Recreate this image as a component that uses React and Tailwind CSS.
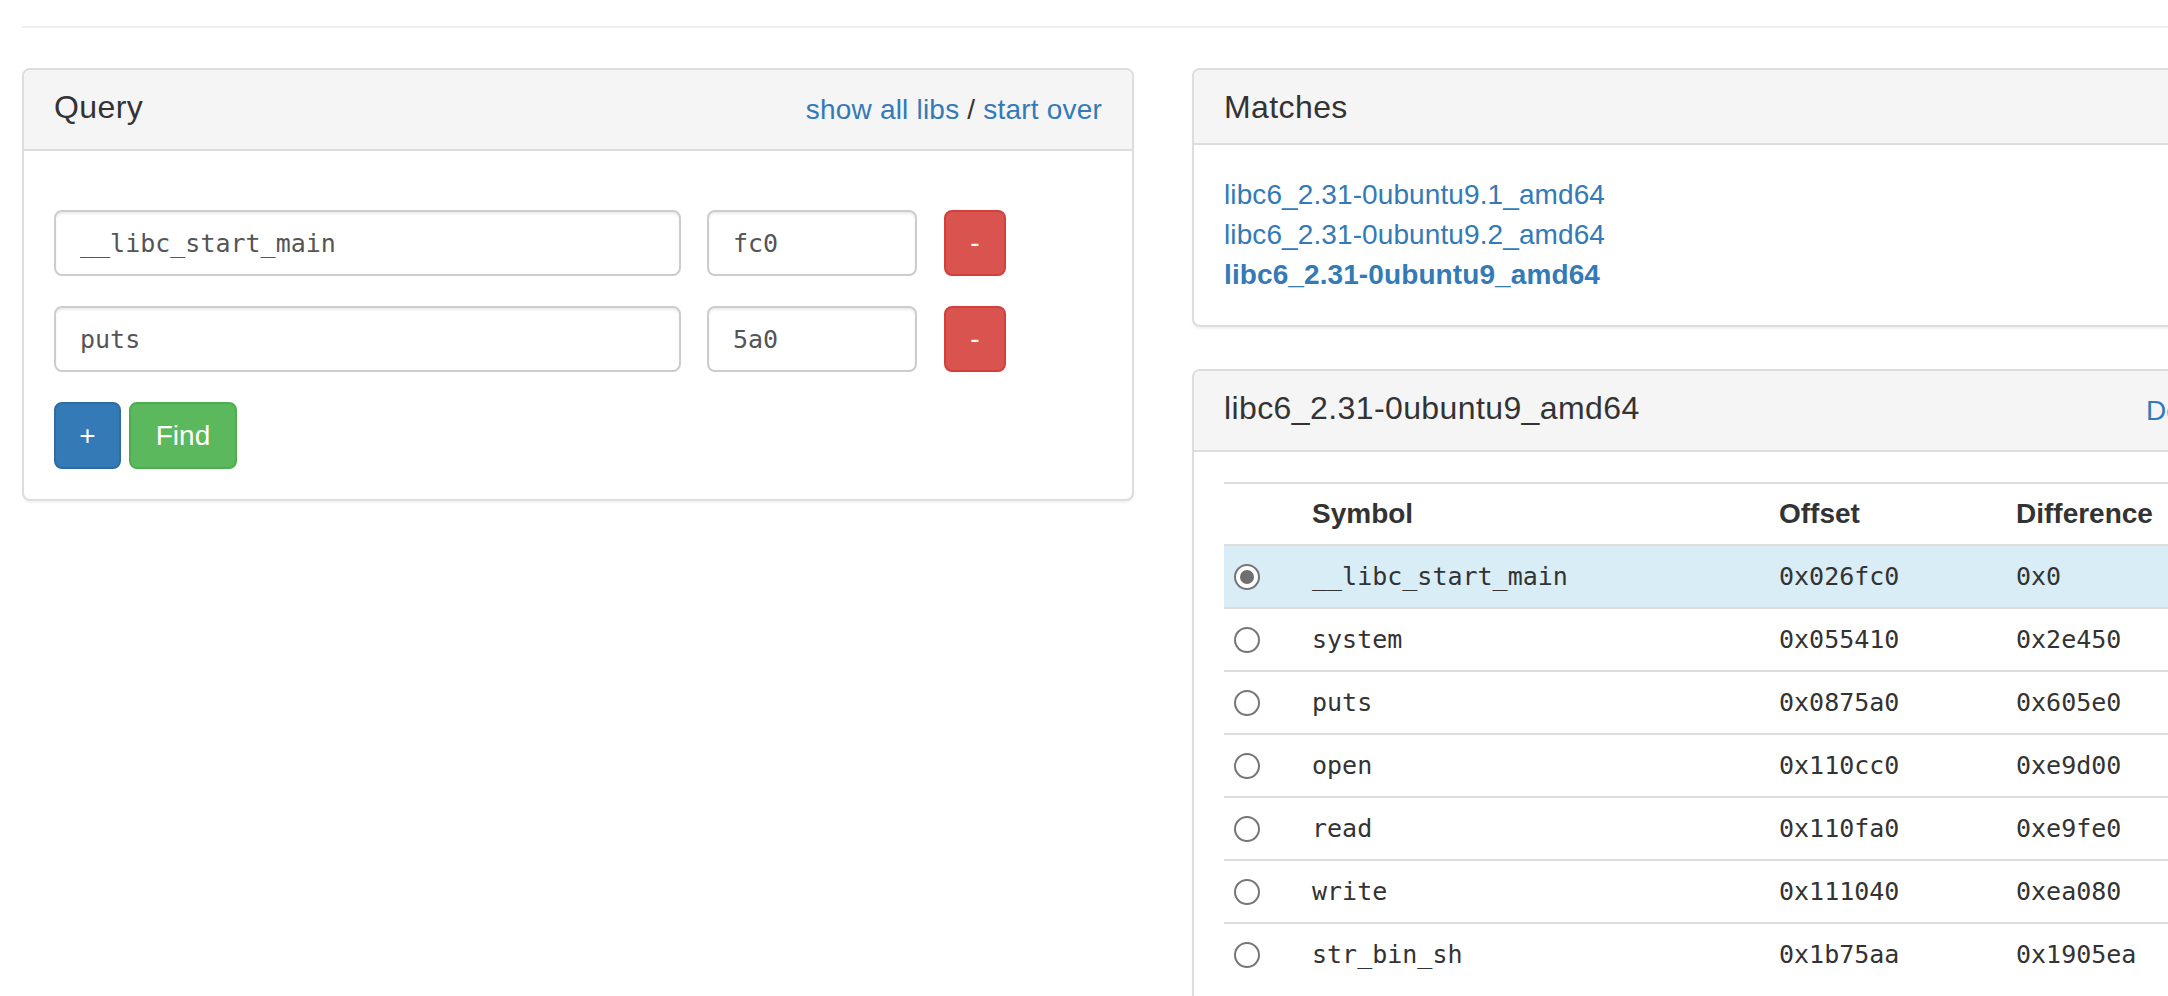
import React from 'react';

const rows = [
  { sym: '__libc_start_main', off: '0x026fc0', diff: '0x0', sel: true },
  { sym: 'system', off: '0x055410', diff: '0x2e450' },
  { sym: 'puts', off: '0x0875a0', diff: '0x605e0' },
  { sym: 'open', off: '0x110cc0', diff: '0xe9d00' },
  { sym: 'read', off: '0x110fa0', diff: '0xe9fe0' },
  { sym: 'write', off: '0x111040', diff: '0xea080' },
  { sym: 'str_bin_sh', off: '0x1b75aa', diff: '0x1905ea' },
];

const queries = [
  { sym: '__libc_start_main', off: 'fc0' },
  { sym: 'puts', off: '5a0' },
];

const Radio = ({ checked }) => (
  <div className="w-[26px] h-[26px] rounded-full border-2 border-[#767676] bg-white flex items-center justify-center">
    {checked && <div className="w-[14px] h-[14px] rounded-full bg-[#6f6f6f]" />}
  </div>
);

const Panel = ({ className = '', children }) => (
  <div className={`w-[1112px] shrink-0 rounded-[8px] border-2 border-[#ddd] bg-white shadow-[0_2px_2px_rgba(0,0,0,0.05)] ${className}`}>
    {children}
  </div>
);

const App = () => {
  return (
    <div className="w-[2168px] h-[996px] overflow-hidden bg-white text-[#333] font-['Liberation_Sans',Arial,sans-serif]">
      <div className="ml-[22px] mt-[26px] h-[2px] bg-[#eee]" />

      <div className="flex items-start gap-[58px] pl-[22px] mt-[40px]">
        {/* Query */}
        <Panel>
          <div className="flex items-start justify-between h-[81px] px-[30px] pt-[20px] bg-[#f5f5f5] border-b-2 border-[#ddd] rounded-t-[6px]">
            <h3 className="text-[32px] leading-[35px] tracking-[0.4px]">Query</h3>
            <div className="text-[28px] leading-[40px] tracking-[0.2px]">
              <a href="#" className="text-[#337ab7]">show all libs</a> / <a href="#" className="text-[#337ab7]">start over</a>
            </div>
          </div>
          <div className="px-[30px] pt-[59px] pb-[30px]">
            {queries.map((q) => (
              <div key={q.sym} className="flex items-center mb-[30px]">
                <input
                  readOnly
                  value={q.sym}
                  className="w-[627px] h-[66px] px-[24px] rounded-[8px] border-2 border-[#ccc] shadow-[inset_0_2px_2px_rgba(0,0,0,0.075)] text-[25px] text-[#555] font-['DejaVu_Sans_Mono',monospace] outline-none"
                />
                <input
                  readOnly
                  value={q.off}
                  className="ml-[26px] w-[210px] h-[66px] px-[24px] rounded-[8px] border-2 border-[#ccc] shadow-[inset_0_2px_2px_rgba(0,0,0,0.075)] text-[25px] text-[#555] font-['DejaVu_Sans_Mono',monospace] outline-none"
                />
                <button className="ml-[27px] w-[62px] h-[66px] rounded-[8px] border-2 border-[#d43f3a] bg-[#d9534f] text-white text-[28px]">
                  -
                </button>
              </div>
            ))}
            <div className="flex items-center gap-[8px]">
              <button className="w-[67px] h-[67px] rounded-[8px] border-2 border-[#2e6da4] bg-[#337ab7] text-white text-[28px]">
                +
              </button>
              <button className="w-[108px] h-[67px] rounded-[8px] border-2 border-[#4cae4c] bg-[#5cb85c] text-white text-[28px]">
                Find
              </button>
            </div>
          </div>
        </Panel>

        <div className="flex flex-col gap-[42px] shrink-0">
          {/* Matches */}
          <Panel>
            <div className="h-[75px] px-[30px] pt-[20px] bg-[#f5f5f5] border-b-2 border-[#ddd] rounded-t-[6px]">
              <h3 className="text-[32px] leading-[35px] tracking-[0.4px]">Matches</h3>
            </div>
            <div className="p-[30px] text-[28px] leading-[40px] tracking-[0.1px]">
              <a href="#" className="block text-[#337ab7]">libc6_2.31-0ubuntu9.1_amd64</a>
              <a href="#" className="block text-[#337ab7]">libc6_2.31-0ubuntu9.2_amd64</a>
              <a href="#" className="block text-[#337ab7] font-bold">libc6_2.31-0ubuntu9_amd64</a>
            </div>
          </Panel>

          {/* Selected lib */}
          <Panel>
            <div className="flex items-start justify-between h-[81px] px-[30px] pt-[20px] bg-[#f5f5f5] border-b-2 border-[#ddd] rounded-t-[6px]">
              <h3 className="text-[32px] leading-[35px] tracking-[0.4px]">libc6_2.31-0ubuntu9_amd64</h3>
              <a href="#" className="text-[28px] leading-[40px] tracking-[0.2px] text-[#337ab7]">Download</a>
            </div>
            <div className="p-[30px]">
              <div className="w-[1048px]">
                <div className="flex items-center h-[62px] border-t-2 border-[#ddd] text-[28px] font-bold">
                  <div className="w-[78px]" />
                  <div className="w-[467px] px-[10px]">Symbol</div>
                  <div className="w-[237px] px-[10px]">Offset</div>
                  <div className="flex-1 px-[10px]">Difference</div>
                </div>
                {rows.map((r) => (
                  <div
                    key={r.sym}
                    className={`flex items-center h-[63px] border-t-2 border-[#ddd] text-[25px] font-['DejaVu_Sans_Mono',monospace] ${r.sel ? 'bg-[#d9edf7]' : ''}`}
                  >
                    <div className="w-[78px] pl-[10px]">
                      <Radio checked={r.sel} />
                    </div>
                    <div className="w-[467px] px-[10px]">{r.sym}</div>
                    <div className="w-[237px] px-[10px]">{r.off}</div>
                    <div className="flex-1 px-[10px]">{r.diff}</div>
                  </div>
                ))}
              </div>
            </div>
          </Panel>
        </div>
      </div>
    </div>
  );
};

export default App;
